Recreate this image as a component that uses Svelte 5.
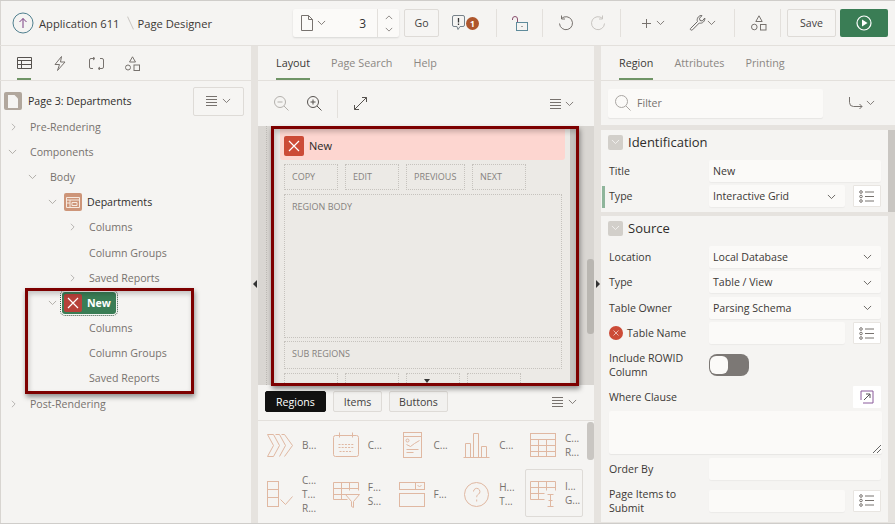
<script>
  const tree = [
    { label: 'Pre-Rendering', level: 0, arrow: 'right' },
    { label: 'Components', level: 0, arrow: 'down' },
    { label: 'Body', level: 1, arrow: 'down' },
    { label: 'Departments', level: 2, arrow: 'down', icon: 'region' },
    { label: 'Columns', level: 3, arrow: 'right' },
    { label: 'Column Groups', level: 3 },
    { label: 'Saved Reports', level: 3, arrow: 'right' },
    { label: 'New', level: 2, arrow: 'down', icon: 'error' },
    { label: 'Columns', level: 3 },
    { label: 'Column Groups', level: 3 },
    { label: 'Saved Reports', level: 3 },
    { label: 'Post-Rendering', level: 0, arrow: 'right' }
  ];

  const gallery = [
    { icon: 'breadcrumb', lines: ['B...'] },
    { icon: 'calendar', lines: ['C...'] },
    { icon: 'card', lines: ['C...'] },
    { icon: 'chart', lines: ['C...'] },
    { icon: 'grid', lines: ['C...', 'R...'] },
    { icon: 'check', lines: ['C...', 'T...', 'R...'] },
    { icon: 'filter', lines: ['F...', 'S...'] },
    { icon: 'form', lines: ['F...'] },
    { icon: 'help', lines: ['H...', 'T...'] },
    { icon: 'ig', lines: ['I...', 'G...'], selected: true }
  ];
</script>

{#snippet chevron(cls = '')}
  <svg class="chev {cls}" viewBox="0 0 10 6" width="9" height="5.500"><path d="M1 1l4 4 4-4" /></svg>
{/snippet}

{#snippet menu()}
  <svg class="ico" viewBox="0 0 12 10" width="12" height="10"><path d="M0 .5h11M0 3.500h11M0 6.500h11M0 9.500h11" /></svg>
{/snippet}

{#snippet listBtn()}
  <button class="list-btn" aria-label="list">
    <svg class="ico" viewBox="0 0 16 13" width="16" height="13">
      <circle cx="2" cy="2" r="1.300" /><circle cx="2" cy="6.500" r="1.300" /><circle cx="2" cy="11" r="1.300" />
      <path d="M6 2h9M6 6.500h9M6 11h9" />
    </svg>
  </button>
{/snippet}

{#snippet xmark()}
  <svg viewBox="0 0 12 12" width="12" height="12"><path class="x" d="M1 1l10 10M11 1L1 11" /></svg>
{/snippet}

<div class="app">
  <header class="top">
    <div class="crumbs">
      <svg viewBox="0 0 22 22" width="22" height="22">
        <circle cx="11" cy="11" r="10" fill="none" stroke="#50808f" stroke-width="1" />
        <path d="M11 16V6.500M7.500 10L11 6.500l3.500 3.500" fill="none" stroke="#7a3d82" stroke-width="1" />
      </svg>
      <span class="crumb">Application 611</span>
      <span class="slash"></span>
      <span class="crumb strong">Page Designer</span>
    </div>

    <div class="page-pick">
      <svg class="ico doc" viewBox="0 0 12 16" width="12" height="16"><path d="M.5.5h7l4 4v11H.5zM7.500.5v4h4" /></svg>
      {@render chevron()}
      <span class="page-no">3</span>
      <div class="spin">
        <svg class="chev flip" viewBox="0 0 10 6" width="8" height="5"><path d="M1 5l4-4 4 4" /></svg>
        <svg class="chev" viewBox="0 0 10 6" width="8" height="5"><path d="M1 1l4 4 4-4" /></svg>
      </div>
    </div>
    <button class="btn go">Go</button>

    <svg class="warn" viewBox="0 0 13 16" width="13" height="16">
      <path d="M2 .5h9a1.500 1.500 0 0 1 1.500 1.500v8a1.500 1.500 0 0 1-1.500 1.500H8l-2 3-1-3H2A1.500 1.500 0 0 1 .5 10V2A1.500 1.500 0 0 1 2 .5z" fill="none" stroke="#77828a" />
      <path d="M6.500 3v4.500M6.500 8.500v1.500" stroke="#333" stroke-width="1.300" />
    </svg>
    <span class="badge">1</span>
    <span class="sep s1"></span>
    <svg class="lock" viewBox="0 0 16 15" width="16" height="15">
      <path d="M.5 4V3a2.500 2.500 0 0 1 5 0v3.500" fill="none" stroke="#8a4f6e" />
      <rect x="4.500" y="6.500" width="11" height="8" fill="none" stroke="#5f8b9b" />
      <path d="M9.500 10.500h1" stroke="#555" />
    </svg>
    <span class="sep s2"></span>
    <svg class="undo" viewBox="0 0 16 16" width="16" height="16"><path d="M3.500 3.500A6.500 6.500 0 1 1 1.500 8.500M3.500.5v3.500H7" /></svg>
    <svg class="undo redo" viewBox="0 0 16 16" width="16" height="16"><path d="M12.500 3.500A6.500 6.500 0 1 0 14.500 8.500M12.500.5v3.500H9" /></svg>
    <span class="sep s3"></span>
    <svg class="ico plus" viewBox="0 0 11 11" width="11" height="11"><path d="M5.500 1v9M1 5.500h9" /></svg>
    {@render chevron('c-plus')}
    <svg class="wrench" viewBox="0 0 18 18" width="18" height="18">
      <path d="M1.500 14.500l7-7c-1-2.500.5-5.500 3.500-6l1 .2-2.500 2.500.5 2.300 2.300.5L15.800 4c.5 3-2.500 6-5.500 5l-6.800 6.800c-1 1-3 -.3-2 -1.300z" fill="none" stroke="#6d6a68" />
    </svg>
    {@render chevron('c-wrench')}
    <span class="sep s4"></span>
    <svg class="ico shapes" viewBox="0 0 16 16" width="16" height="16">
      <path d="M8 .8l3.200 5.700H4.800z" /><circle cx="3.300" cy="12" r="2.800" /><rect x="9.500" y="9.500" width="5.500" height="5.500" />
    </svg>
    <span class="sep s5"></span>
    <button class="btn save">Save</button>
    <button class="run" aria-label="run">
      <svg viewBox="0 0 16 16" width="16" height="16">
        <circle cx="8" cy="8" r="7" fill="none" stroke="#fff" stroke-width="1.200" />
        <path d="M6 4.500l5.500 3.500L6 11.500z" fill="#fff" />
      </svg>
    </button>
  </header>

  <div class="panes">
    <section class="left">
      <div class="tabs icon-tabs">
        <span class="tab-ico on">
          <svg class="ico dark" viewBox="0 0 15 12" width="15" height="12"><path d="M.5.5h14v11H.5zM.5 3.500h14M4.500 3.500v8M.5 7.500h14" /></svg>
        </span>
        <span class="tab-ico">
          <svg class="ico" viewBox="0 0 12 15" width="12" height="15"><path d="M7.500.5L1 8.500h4.500L3.500 14.500l7.500-8.500H6.500z" /></svg>
        </span>
        <span class="tab-ico">
          <svg class="ico" viewBox="0 0 15 13" width="15" height="13"><path d="M5 1.500H2A1.500 1.500 0 0 0 .5 3v7A1.500 1.500 0 0 0 2 11.500h2M10 11.500h3a1.500 1.500 0 0 0 1.500-1.500V3A1.500 1.500 0 0 0 13 1.500h-2M4 0l2 1.500L4 3M11 10l-2 1.500 2 1.500" /></svg>
        </span>
        <span class="tab-ico">
          <svg class="ico" viewBox="0 0 15 15" width="15" height="15"><path d="M7.500.8l3 5.200h-6z" /><circle cx="3" cy="11.500" r="2.500" /><rect x="9" y="9" width="5.500" height="5.500" /></svg>
        </span>
      </div>

      <div class="page-row">
        <span class="page-ico">
          <svg viewBox="0 0 10 13" width="10" height="13"><path d="M0 0h6.500L10 3.500V13H0z" fill="#f5f4f2" /></svg>
        </span>
        <span class="page-title">Page 3: Departments</span>
        <button class="btn tree-menu">{@render menu()}{@render chevron()}</button>
      </div>

      <ul class="tree">
        {#each tree as node}
          <li class="node lv{node.level}">
            <span class="arrow">
              {#if node.arrow === 'down'}
                {@render chevron()}
              {:else if node.arrow === 'right'}
                <svg class="chev rt" viewBox="0 0 6 10" width="5" height="8"><path d="M1 1l4 4-4 4" /></svg>
              {/if}
            </span>
            {#if node.icon === 'region'}
              <span class="region-ico">
                <svg viewBox="0 0 14 11" width="14" height="11"><path d="M.5.5h13v10H.5zM.5 3h13M4 3v7.500M.5 6h3.500M6 5.500h5v3H6z" fill="none" stroke="#f6e9df" /></svg>
              </span>
              <span class="node-strong">{node.label}</span>
            {:else if node.icon === 'error'}
              <span class="selected">
                <span class="sel-x">{@render xmark()}</span>
                <b>{node.label}</b>
              </span>
            {:else}
              <span>{node.label}</span>
            {/if}
          </li>
        {/each}
      </ul>
      <div class="callout call-left"></div>
    </section>

    <div class="split">
      <i class="tri-left"></i>
    </div>

    <section class="mid">
      <nav class="tabs text-tabs">
        <span class="on">Layout</span><span>Page Search</span><span>Help</span>
      </nav>
      <div class="mid-tools">
        <svg class="ico faint" viewBox="0 0 15 15" width="15" height="15"><circle cx="6" cy="6" r="5.500" /><path d="M3.500 6h5M10 10l4.500 4.500" /></svg>
        <svg class="ico dark" viewBox="0 0 15 15" width="15" height="15"><circle cx="6" cy="6" r="5.500" /><path d="M3.500 6h5M6 3.500v5M10 10l4.500 4.500" /></svg>
        <span class="vsep"></span>
        <svg class="ico dark" viewBox="0 0 13 13" width="13" height="13"><path d="M8 .5h4.500V5M12.500.5L.5 12.500M.5 8v4.500H5" /></svg>
        <span class="grow"></span>
        {@render menu()}{@render chevron()}
      </div>

      <div class="canvas">
        <div class="sheet">
          <div class="err-bar">
            <span class="err-x">{@render xmark()}</span>
            <span>New</span>
          </div>
          <div class="slots">
            <span class="slot w54">COPY</span><span class="slot w54">EDIT</span><span class="slot w59">PREVIOUS</span><span class="slot w54">NEXT</span>
          </div>
          <div class="slot body-slot">REGION BODY</div>
          <div class="slot sub-slot">SUB REGIONS</div>
          <div class="slots cut">
            <span class="slot w54"></span><span class="slot w54"></span><span class="slot w54"></span><span class="slot w54"></span>
          </div>
          <i class="tri-down"></i>
        </div>
        <span class="thumb"></span>
      </div>

      <div class="gal-head">
        <button class="gal-tab on">Regions</button>
        <button class="gal-tab">Items</button>
        <button class="gal-tab">Buttons</button>
        <span class="grow"></span>
        {@render menu()}{@render chevron()}
      </div>

      <div class="gallery">
        {#each gallery as item}
          <div class="cell" class:picked={item.selected}>
            <svg class="gal-ico" viewBox="0 0 28 28" width="28" height="28">
              <g transform="translate(.5 .5)">
                {#if item.icon === 'breadcrumb'}
                  <path d="M1 3h6l6 11-6 11H1l6-11zM9 3h4l6 11-6 11M15 3h3l8 11-8 11" />
                {:else if item.icon === 'calendar'}
                  <rect x="1" y="4" width="25" height="21" rx="2" /><path d="M7 1v5M20 1v5" /><path d="M6 13h16M6 16h16M7 20h13" stroke-dasharray="2 1.200" />
                {:else if item.icon === 'card'}
                  <rect x="5" y="1" width="18" height="25" /><path d="M5 5h18M8 13l4 2 4-3 5-3M8 18h12M8 21h7" /><circle cx="9" cy="9" r="1.500" />
                {:else if item.icon === 'chart'}
                  <path d="M0 26h26M2 26V12h5v14M10 26V2h5v24M18 26V15h5v11" />
                {:else if item.icon === 'grid'}
                  <rect x="1" y="2" width="25" height="23" /><path d="M1 8h25M1 14h25M1 20h25M9 8v17M17 8v17" />
                {:else if item.icon === 'check'}
                  <rect x="1" y="1" width="11" height="25" /><path d="M1 9h11M1 17h11M14 19l5 5 7-8" />
                {:else if item.icon === 'filter'}
                  <path d="M1 2h25v8M1 2v17h14M1 8h25M1 14h14M9 2v17M17 2v8M13 14h14l-6 7v6l-2-1v-5z" />
                {:else if item.icon === 'form'}
                  <rect x="1" y="2" width="25" height="7" /><rect x="1" y="13" width="25" height="13" /><path d="M17 2v7M19 4.500l2 2 2-2" />
                {:else if item.icon === 'help'}
                  <circle cx="13" cy="14" r="12" /><path d="M10 11a3.200 3.200 0 1 1 5 2.700c-1.300.9-1.800 1.500-1.800 3M13.200 19v2" />
                {:else}
                  <path d="M1 2h25v9M1 2v18h14M1 8h25M1 14h14M9 2v18M17 2v9M18 15h6M18 27h6M21 15v12M19 21h4" />
                {/if}
              </g>
            </svg>
            <span class="cell-label">
              {#each item.lines as line}<span>{line}</span>{/each}
            </span>
          </div>
        {/each}
        <span class="gal-thumb"></span>
      </div>
      <div class="callout call-mid"></div>
    </section>

    <div class="split">
      <i class="tri-right"></i>
    </div>

    <section class="right">
      <nav class="tabs text-tabs">
        <span class="on">Region</span><span>Attributes</span><span>Printing</span>
      </nav>
      <div class="filter-row">
        <div class="filter">
          <svg class="ico faint2" viewBox="0 0 16 16" width="16" height="16"><circle cx="6.500" cy="6.500" r="6" /><path d="M11 11l4.500 4.500" /></svg>
          <span>Filter</span>
        </div>
        <svg class="ico route" viewBox="0 0 14 13" width="14" height="13"><path d="M.5 0v5.500A4 4 0 0 0 4.500 9.500H13M10.500 7l2.500 2.500-2.500 2.500" /></svg>
        {@render chevron()}
      </div>

      <div class="props">
        <div class="group">
          <h3><span class="toggle">{@render chevron()}</span>Identification</h3>
          <div class="prop"><label>Title</label><div class="field">New</div></div>
          <div class="prop marked">
            <label>Type</label>
            <div class="field short sel">Interactive Grid{@render chevron()}</div>
            {@render listBtn()}
          </div>
        </div>
        <div class="group second">
          <h3><span class="toggle">{@render chevron()}</span>Source</h3>
          <div class="prop"><label>Location</label><div class="field sel">Local Database{@render chevron()}</div></div>
          <div class="prop"><label>Type</label><div class="field sel">Table / View{@render chevron()}</div></div>
          <div class="prop"><label>Table Owner</label><div class="field sel">Parsing Schema{@render chevron()}</div></div>
          <div class="prop">
            <label class="err-label"><span class="err-dot">{@render xmark()}</span>Table Name</label>
            <div class="field short"></div>
            {@render listBtn()}
          </div>
          <div class="prop tall">
            <label>Include ROWID Column</label>
            <span class="switch"><i></i></span>
          </div>
          <div class="prop where">
            <label>Where Clause</label>
            <button class="list-btn expand" aria-label="expand">
              <svg viewBox="0 0 14 14" width="14" height="14">
                <path d="M1 10V1h12v12H3" fill="none" stroke="#8a5a9b" />
                <path d="M4 10l6-6M6 4h4v4" fill="none" stroke="#555" />
              </svg>
            </button>
          </div>
          <div class="area">
            <svg viewBox="0 0 8 8" width="8" height="8"><path d="M0 8l8-8M4 8l4-4" stroke="#666" fill="none" /></svg>
          </div>
          <div class="prop"><label>Order By</label><div class="field"></div></div>
          <div class="prop tall">
            <label>Page Items to Submit</label>
            <div class="field short"></div>
            {@render listBtn()}
          </div>
        </div>
        <span class="prop-thumb"></span>
      </div>
    </section>
  </div>
</div>

<style>
  :global(body) {
    margin: 0;
    background: #f5f4f2;
  }

  .app {
    width: 895px;
    height: 524px;
    overflow: hidden;
    border-top: 1px solid #cfcdca;
    border-bottom: 1px solid #cfcdca;
    box-sizing: border-box;
    font-family: "Open Sans", "Liberation Sans", sans-serif;
    font-size: 10.600px;
    color: #6b6763;
    background: #f5f4f2;
    box-shadow: inset 1px 0 0 #d8d5d1;
    display: flex;
    flex-direction: column;
  }

  button {
    font: inherit;
    padding: 0;
    cursor: pointer;
  }

  .chev, .ico, .undo {
    fill: none;
    stroke: #77726e;
    stroke-width: 1;
    flex: none;
  }

  .ico.dark { stroke: #56524f; }
  .ico.faint { stroke: #b3b0ac; }
  .ico.faint2 { stroke: #a9a6a2; }

  .x {
    stroke: #fff;
    stroke-width: 1.200;
    fill: none;
  }

  .top {
    height: 45px;
    flex: none;
    box-sizing: border-box;
    border-bottom: 1px solid #e3e0dc;
    display: flex;
    align-items: center;
    padding-left: 12px;
    position: relative;
  }

  .crumbs {
    width: 281px;
    flex: none;
    display: flex;
    align-items: center;
    white-space: nowrap;
  }

  .crumb {
    font-size: 11.200px;
    color: #3b3835;
    margin-left: 5px;
  }

  .crumb.strong {
    font-weight: 500;
    margin-left: 7px;
  }

  .slash {
    width: 1px;
    height: 14px;
    margin-left: 10px;
    background: #c9c6c2;
    transform: rotate(-25deg);
  }

  .page-pick {
    width: 106px;
    height: 28px;
    background: #fbfaf8;
    border-radius: 2px;
    box-shadow: 0 1px 2px #0000001f;
    display: flex;
    align-items: center;
    padding-left: 8px;
    box-sizing: border-box;
    gap: 4px;
  }

  .page-no {
    margin-left: auto;
    padding-right: 7px;
    color: #333;
    font-size: 12px;
  }

  .spin {
    width: 21px;
    height: 100%;
    border-left: 1px solid #e3e0dc;
    display: flex;
    flex-direction: column;
    align-items: center;
    justify-content: center;
    gap: 7px;
  }

  .btn {
    background: #f6f5f3;
    border: 1px solid #dedbd7;
    border-radius: 2px;
    color: #44413e;
    height: 28px;
    box-sizing: border-box;
  }

  .go {
    width: 35px;
    margin-left: 5px;
  }

  .warn { margin-left: 13px; }

  .badge {
    width: 13px;
    height: 13px;
    border-radius: 50%;
    background: #ae562c;
    color: #fff;
    font-size: 8.500px;
    font-weight: 700;
    line-height: 13px;
    text-align: center;
    margin-left: 1px;
  }

  .sep {
    width: 1px;
    height: 28px;
    background: #e3e0dc;
    flex: none;
  }

  .s1 { margin-left: 17px; }
  .lock { margin: 0 14px 0 15px; flex: none; }
  .s2 + .undo { margin-left: 15px; }
  .redo { margin-left: 16px; stroke: #c8c5c1; }
  .s3 { margin-left: 14px; }
  .plus { margin-left: 20px; }
  .top :global(.c-plus) { margin-left: 4px; }
  .wrench { margin-left: 24px; flex: none; }
  .s4 { margin-left: 18px; }
  .shapes { margin-left: 16px; }
  .s5 { margin-left: 13px; }

  .save {
    margin-left: 6px;
    width: 49px;
  }

  .run {
    margin-left: 4px;
    width: 48px;
    height: 28px;
    border: 0;
    border-radius: 2px;
    background: #3a7d55;
    display: flex;
    align-items: center;
    justify-content: center;
  }

  .panes {
    flex: 1;
    min-height: 0;
    display: grid;
    grid-template-columns: 251px 7px 336px 7px 294px;
  }

  section {
    min-width: 0;
    min-height: 0;
    display: flex;
    flex-direction: column;
    position: relative;
  }

  .split {
    background: #e6e3df;
    position: relative;
  }

  .tri-left, .tri-right {
    position: absolute;
    top: 234px;
    width: 0;
    height: 0;
    border-top: 4px solid transparent;
    border-bottom: 4px solid transparent;
  }

  .tri-left {
    left: 2px;
    border-right: 4px solid #333;
  }

  .tri-right {
    left: 2px;
    border-left: 4px solid #333;
  }

  .tabs {
    height: 35px;
    flex: none;
    box-sizing: border-box;
    border-bottom: 1px solid #e3e0dc;
    display: flex;
  }

  .icon-tabs {
    padding-left: 17px;
    gap: 22px;
  }

  .tab-ico {
    width: 14px;
    display: flex;
    align-items: center;
    justify-content: center;
    height: 34px;
    box-sizing: border-box;
  }

  .tab-ico.on {
    box-shadow: inset 0 -2px 0 #6f9466;
  }

  .text-tabs {
    padding-left: 18px;
    gap: 21px;
    font-size: 10.800px;
    line-height: 34px;
    color: #8b8783;
  }

  .text-tabs span {
    height: 34px;
    padding: 0;
  }

  .text-tabs .on {
    color: #3b3835;
    box-shadow: inset 0 -2px 0 #6f9466;
  }

  .page-row {
    height: 37px;
    flex: none;
    display: flex;
    align-items: center;
    padding: 3px 7px 0 4px;
    box-sizing: border-box;
  }

  .page-ico {
    width: 18px;
    height: 18px;
    background: #b1a79d;
    border-radius: 2px;
    display: flex;
    align-items: center;
    justify-content: center;
  }

  .page-title {
    margin-left: 6px;
    color: #2f2d2b;
    flex: 1;
  }

  .tree-menu {
    width: 51px;
    height: 29px;
    display: flex;
    align-items: center;
    justify-content: center;
    gap: 4px;
  }

  .tree {
    list-style: none;
    margin: -4px 0 0;
    padding: 0;
  }

  .node {
    height: 25.200px;
    display: flex;
    align-items: center;
    color: #77726e;
  }

  .arrow {
    flex: none;
    display: flex;
    justify-content: flex-start;
  }

  .arrow :global(.chev) { stroke: #aaa7a3; }
  .arrow .rt { margin-left: 3px; }

  .lv0 { padding-left: 8px; }
  .lv0 > .arrow { width: 22px; }
  .lv1 { padding-left: 28px; }
  .lv1 > .arrow { width: 22px; }
  .lv2 { padding-left: 48px; }
  .lv2 > .arrow { width: 13px; }
  .lv3 { padding-left: 67px; }
  .lv3 > .arrow { width: 22px; }

  .region-ico {
    width: 18px;
    height: 18px;
    background: #cd9579;
    border-radius: 2px;
    display: flex;
    align-items: center;
    justify-content: center;
    margin: 0 5px 0 3px;
  }

  .node-strong {
    color: #2f2d2b;
  }

  .selected {
    height: 22px;
    width: 54px;
    margin-left: 1px;
    box-sizing: border-box;
    background: #3a7d55;
    border-radius: 3px;
    color: #fff;
    display: flex;
    align-items: center;
    padding-left: 2px;
    gap: 5px;
    outline: 1px dotted #3a5a45;
    outline-offset: 1px;
  }

  .sel-x {
    width: 18px;
    height: 18px;
    background: #b6413a;
    border-radius: 2px;
    display: flex;
    align-items: center;
    justify-content: center;
  }

  .callout {
    position: absolute;
    border: 3px solid #7d0000;
    box-sizing: border-box;
    box-shadow: 1px 3px 5px #0000006b, inset 1px 3px 5px #00000033;
    pointer-events: none;
  }

  .call-left {
    left: 25px;
    top: 242px;
    width: 169px;
    height: 106px;
  }

  .call-mid {
    left: 13px;
    top: 80px;
    width: 308px;
    height: 260px;
  }

  .mid-tools {
    height: 45px;
    flex: none;
    display: flex;
    align-items: center;
    padding: 0 20px 0 16px;
    gap: 3px;
    box-sizing: border-box;
  }

  .mid-tools .ico:nth-child(2) { margin-left: 15px; }

  .vsep {
    width: 1px;
    height: 28px;
    background: #e3e0dc;
    margin: 0 13px 0 12px;
  }

  .grow { flex: 1; }

  .canvas {
    height: 259px;
    flex: none;
    background: #d9d6d2;
    position: relative;
    overflow: hidden;
    padding-left: 16px;
  }

  .canvas::before {
    content: "";
    position: absolute;
    left: 8px;
    top: 0;
    bottom: 0;
    border-left: 1px dotted #bdbab5;
  }

  .sheet {
    height: 100%;
    width: 304px;
    background: #eceae6;
    border-right: 8px solid #c6c3bf;
    box-sizing: border-box;
    padding-left: 6px;
    position: relative;
  }

  .err-bar {
    width: 285px;
    height: 34px;
    box-sizing: border-box;
    padding: 5px 0 0 4px;
    background: #fdd6d0;
    border-radius: 0 0 3px 3px;
    display: flex;
    align-items: center;
    gap: 5px;
    color: #2a2826;
    font-size: 11px;
  }

  .err-x {
    width: 20px;
    height: 20px;
    background: #cc4b37;
    border-radius: 2px;
    display: flex;
    align-items: center;
    justify-content: center;
  }

  .slots {
    display: flex;
    gap: 7px;
    padding: 4px 0 0 4px;
  }

  .slot {
    display: block;
    box-sizing: border-box;
    border: 1px dotted #c6c3be;
    font-size: 9px;
    color: #86827e;
    padding-left: 7px;
    line-height: 24px;
    height: 26px;
  }

  .w54 { width: 54px; }
  .w59 { width: 59px; }

  .body-slot {
    margin: 4px 0 0 4px;
    width: 278px;
    height: 144px;
  }

  .sub-slot {
    margin: 3px 0 0 4px;
    width: 278px;
    height: 28px;
    line-height: 24px;
  }

  .cut { padding-top: 4px; }

  .tri-down {
    position: absolute;
    left: 150px;
    bottom: 2px;
    width: 0;
    height: 0;
    border-left: 3px solid transparent;
    border-right: 3px solid transparent;
    border-top: 4px solid #333;
  }

  .thumb {
    position: absolute;
    right: 0;
    top: 133px;
    width: 7px;
    height: 75px;
    background: #b9b6b1;
    border-radius: 3px;
  }

  .gal-head {
    height: 36px;
    flex: none;
    box-sizing: border-box;
    border-bottom: 1px solid #e3e0dc;
    display: flex;
    align-items: center;
    padding: 0 17px 2px 7px;
    gap: 7px;
  }

  .gal-head > .ico { margin-right: -3px; }

  .gal-tab {
    height: 21px;
    border: 1px solid #dedbd7;
    border-radius: 2px;
    background: #f2f1ef;
    color: #44413e;
    width: 49px;
  }

  .gal-tab:last-of-type { width: 59px; }

  .gal-tab.on {
    background: #111;
    border-color: #111;
    color: #fff;
    width: 61px;
  }

  .gallery {
    flex: 1;
    position: relative;
    display: grid;
    grid-template-columns: repeat(5, 65.750px);
    grid-template-rows: 48px 50px;
    padding-left: 6px;
    align-content: start;
    overflow: hidden;
  }

  .cell {
    display: flex;
    align-items: center;
    gap: 8px;
    box-sizing: border-box;
    font-size: 10px;
    color: #77726e;
    padding-left: 1px;
    border: 1px solid transparent;
    border-radius: 2px;
  }

  .cell.picked {
    border-color: #dedbd7;
    width: 58px;
    height: 48px;
    margin-left: -2px;
    padding-left: 3px;
  }

  .cell-label {
    display: flex;
    flex-direction: column;
    line-height: 14px;
  }

  .gal-ico {
    fill: none;
    stroke: #e0b8a2;
    stroke-width: 1;
    flex: none;
  }

  .gal-thumb {
    position: absolute;
    right: 0;
    top: 1px;
    width: 7px;
    height: 38px;
    background: #c9c6c2;
    border-radius: 3px;
  }

  .filter-row {
    height: 44px;
    flex: none;
    display: flex;
    align-items: center;
    padding: 0 8px 0 7px;
    box-sizing: border-box;
    gap: 3px;
  }

  .filter {
    width: 215px;
    height: 29px;
    background: #fbfaf8;
    border-radius: 2px;
    box-shadow: 0 1px 1px #0000000f;
    display: flex;
    align-items: center;
    padding-left: 7px;
    gap: 6px;
    box-sizing: border-box;
    color: #77726e;
    margin-right: 23px;
  }

  .props {
    flex: 1;
    min-height: 0;
    background: #e6e3df;
    padding-top: 5px;
    position: relative;
    overflow: hidden;
  }

  .group {
    width: 287px;
    background: #f5f4f2;
    height: 82px;
    color: #3b3835;
  }

  .group.second {
    margin-top: 4px;
    height: 306px;
  }

  h3 {
    margin: 0;
    font-size: 13px;
    font-weight: 400;
    color: #2f2d2b;
    height: 24px;
    padding-left: 7px;
    display: flex;
    align-items: center;
    gap: 5px;
  }

  .toggle {
    width: 15px;
    height: 15px;
    background: #d2cfca;
    border-radius: 2px;
    display: flex;
    align-items: center;
    justify-content: center;
  }

  .toggle :global(.chev) { stroke: #f5f4f2; }

  .prop {
    display: flex;
    align-items: center;
    height: 25.500px;
    padding-left: 8px;
    position: relative;
    box-sizing: border-box;
  }

  .group > h3 + .prop { margin-top: 4px; }

  .prop label {
    width: 100px;
    flex: none;
    line-height: 14px;
  }

  .prop.marked::before {
    content: "";
    position: absolute;
    left: 1px;
    top: 2px;
    width: 3px;
    height: 22px;
    background: #8fb59b;
  }

  .field {
    width: 172px;
    height: 22px;
    flex: none;
    box-sizing: border-box;
    background: #fbfaf8;
    border-radius: 2px;
    box-shadow: 0 1px 1px #0000000a;
    padding: 0 4px;
    line-height: 22px;
    color: #3b3835;
    display: flex;
    align-items: center;
    justify-content: space-between;
  }

  .field.short { width: 136px; }

  .field :global(.chev) {
    margin-right: 5px;
    stroke: #5f5b58;
  }

  .list-btn {
    width: 28px;
    height: 22px;
    margin-left: 8px;
    background: #fff;
    border: 1px solid #e8e5e1;
    border-radius: 1px;
    display: flex;
    align-items: center;
    justify-content: center;
    flex: none;
  }

  .err-label {
    display: flex;
    align-items: center;
    gap: 4px;
  }

  .err-dot {
    width: 14px;
    height: 14px;
    border-radius: 50%;
    background: #cc4b37;
    display: flex;
    align-items: center;
    justify-content: center;
  }

  .err-dot svg {
    width: 6px;
    height: 6px;
  }

  .prop.tall {
    height: 38px;
  }

  .switch {
    width: 40px;
    height: 22px;
    border-radius: 8px;
    background: #7c7875;
    position: relative;
    display: block;
  }

  .switch i {
    position: absolute;
    left: 1px;
    top: 2px;
    width: 18px;
    height: 18px;
    border-radius: 6px;
    background: #fbfaf8;
  }

  .prop.where {
    height: 25px;
  }

  .expand {
    margin-left: 144px;
    border: 0;
  }

  .area {
    margin: 2px 0 2px 8px;
    width: 273px;
    height: 43px;
    background: #fbfaf8;
    border-radius: 2px;
    box-shadow: 0 1px 1px #0000000f;
    position: relative;
  }

  .area svg {
    position: absolute;
    right: 1px;
    bottom: 1px;
  }

  .prop-thumb {
    position: absolute;
    right: 0;
    top: 5px;
    width: 7px;
    height: 82px;
    background: #c9c6c2;
  }
</style>
